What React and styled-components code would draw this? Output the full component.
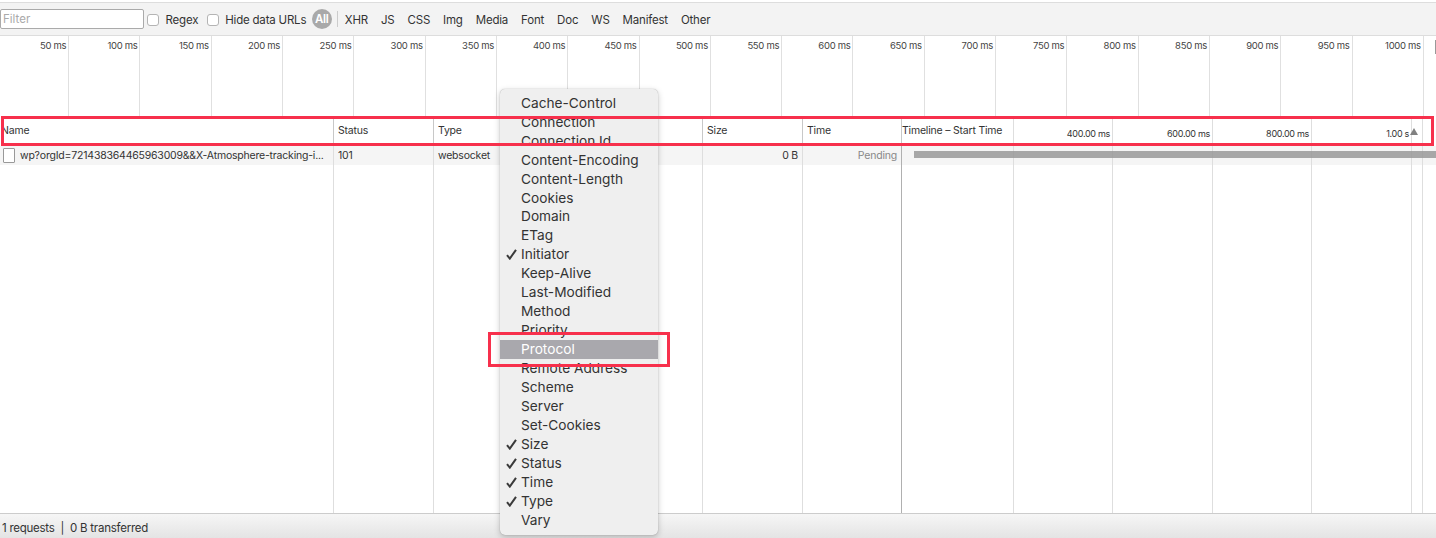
import React from "react";
import styled, { createGlobalStyle } from "styled-components";

const GlobalStyle = createGlobalStyle`
  html, body {
    margin: 0;
    padding: 0;
    background: #fff;
  }
  body {
    font-family: Inter, "Liberation Sans", sans-serif;
    color: #333;
  }
`;

const Page = styled.div`
  position: relative;
  width: 1436px;
  height: 538px;
  overflow: hidden;
  display: flex;
  flex-direction: column;
  padding-top: 2px;
  box-sizing: border-box;
`;

const Toolbar = styled.div`
  flex: none;
  height: 32px;
  display: flex;
  align-items: center;
  background: #f3f3f3;
  border-top: 1px solid #ddd;
  border-bottom: 1px solid #ddd;
  font-size: 11.5px;
  letter-spacing: -0.2px;
  color: #333;
`;

const FilterInput = styled.input`
  width: 144px;
  height: 20px;
  box-sizing: border-box;
  margin: 0;
  padding: 0 2px;
  border: 1px solid #aaa;
  border-radius: 2px;
  background: #fff;
  font: inherit;
  &::placeholder {
    color: #aaa;
  }
`;

const CheckLabel = styled.label`
  display: flex;
  align-items: center;
  margin-left: ${(p) => p.$left}px;
  padding-top: 1px;
  gap: 6.5px;
`;

const CheckBox = styled.span`
  width: 10px;
  height: 10px;
  background: #fff;
  border: 1px solid #b4b4b4;
  border-radius: 3px;
`;

const AllPill = styled.span`
  margin-left: 5.5px;
  width: 20px;
  height: 20px;
  border-radius: 10px;
  background: #a9a9a9;
  color: #fff;
  font-weight: 600;
  text-align: center;
  line-height: 20px;
`;

const Divider = styled.span`
  width: 1px;
  height: 16px;
  margin: 0 7px 0 5px;
  background: #ccc;
`;

const TypeFilters = styled.div`
  display: flex;
  gap: 13px;
  padding-top: 1px;
`;

const Overview = styled.div`
  flex: none;
  height: 81px;
  display: flex;
  background: #fff;
`;

const Tick = styled.div`
  flex: none;
  width: 71.3px;
  box-sizing: border-box;
  padding: 4px 2px 0 0;
  border-right: 1px solid #e0e0e0;
  text-align: right;
  font-size: 9.5px;
  letter-spacing: -0.3px;
  line-height: 12px;
  color: #444;
  white-space: nowrap;
  &:first-child {
    width: 69.2px;
  }
`;

const Table = styled.div`
  flex: 1;
  min-height: 0;
  display: flex;
  background: #fff;
  font-size: 10.5px;
  letter-spacing: -0.2px;
`;

const Column = styled.div`
  flex: none;
  width: ${(p) => p.$width}px;
  box-sizing: border-box;
  border-right: 1px solid ${(p) => p.$line || "#dedede"};
  min-width: 0;
`;

const Head = styled.div`
  height: 29px;
  box-sizing: border-box;
  padding-left: ${(p) => p.$pad ?? 4}px;
  line-height: 27px;
  color: #333;
  background: #fff;
  white-space: nowrap;
  box-shadow: 1px 0 0 #c8c8c8;
`;

const Cell = styled.div`
  height: 19px;
  box-sizing: border-box;
  padding: 0 ${(p) => (p.$right ? 4 : 0)}px 0 ${(p) => (p.$right ? 0 : 4)}px;
  background: #f5f5f5;
  text-align: ${(p) => (p.$right ? "right" : "left")};
  color: ${(p) => (p.$muted ? "#888" : "#333")};
  line-height: 19px;
  white-space: nowrap;
  overflow: hidden;
`;

const NameCell = styled(Cell)`
  display: flex;
  align-items: center;
  gap: 5px;
  padding-left: 3px;
`;

const FileIcon = styled.span`
  flex: none;
  width: 10px;
  height: 13px;
  background: #fff;
  border: 1px solid #999;
  border-radius: 1px;
`;

const Timeline = styled.div`
  position: relative;
  flex: 1;
  min-width: 0;
  display: flex;
`;

const Segment = styled.div`
  flex: ${(p) => (p.$width ? "none" : "1")};
  width: ${(p) => (p.$width ? `${p.$width}px` : "auto")};
  box-sizing: border-box;
  border-right: ${(p) => (p.$width ? "1px solid #dedede" : "none")};
`;

const SegmentHead = styled.div`
  height: 29px;
  box-sizing: border-box;
  padding: 0 2px 0 0;
  display: flex;
  justify-content: ${(p) => (p.$title ? "flex-start" : "flex-end")};
  font-size: ${(p) => (p.$title ? 10.5 : 9)}px;
  letter-spacing: ${(p) => (p.$title ? -0.2 : -0.3)}px;
  line-height: ${(p) => (p.$title ? 27 : 33)}px;
  color: #333;
  background: #fff;
  white-space: nowrap;
`;

const SegmentRow = styled.div`
  height: 19px;
  background: #f5f5f5;
`;

const WaterfallBar = styled.div`
  position: absolute;
  top: 34px;
  left: 12px;
  right: 0;
  height: 7px;
  background: rgba(150, 150, 150, 0.82);
`;

const SortArrow = styled.div`
  position: absolute;
  top: 11px;
  left: 508px;
  width: 0;
  height: 0;
  border-left: 4px solid transparent;
  border-right: 4px solid transparent;
  border-bottom: 7px solid #808080;
`;

const OverviewMark = styled.div`
  position: absolute;
  top: 40px;
  right: 0;
  width: 1px;
  height: 14px;
  background: #999;
`;

const Footer = styled.div`
  flex: none;
  height: 25px;
  box-sizing: border-box;
  padding-left: 2px;
  border-top: 1px solid #ccc;
  background: linear-gradient(#f6f6f6, #e4e4e4);
  font-size: 11.5px;
  letter-spacing: -0.25px;
  line-height: 28px;
  color: #333;
  white-space: pre;
`;

const Menu = styled.div`
  position: absolute;
  top: 89px;
  left: 500px;
  width: 158px;
  box-sizing: border-box;
  padding: 4.75px 0 5px;
  background: #efefef;
  border-radius: 5px;
  box-shadow: 0 0 1px rgba(0, 0, 0, 0.35), 0 2px 6px rgba(0, 0, 0, 0.22);
  font-size: 13.7px;
`;

const MenuItem = styled.div`
  position: relative;
  height: 18.96px;
  padding-left: 21px;
  line-height: 19px;
  color: ${(p) => (p.$active ? "#fff" : "#333")};
  background: ${(p) => (p.$active ? "#a9a8ad" : "transparent")};
`;

const Tickmark = styled.svg`
  position: absolute;
  top: 4px;
  left: 6px;
  width: 11px;
  height: 11px;
`;

const Highlight = styled.div`
  position: absolute;
  top: ${(p) => p.$top}px;
  left: ${(p) => p.$left}px;
  width: ${(p) => p.$w}px;
  height: ${(p) => p.$h}px;
  box-sizing: border-box;
  border: 3px solid #f7304c;
`;

const FILTERS = ["XHR", "JS", "CSS", "Img", "Media", "Font", "Doc", "WS", "Manifest", "Other"];

const TICKS = Array.from({ length: 20 }, (_, i) => `${(i + 1) * 50} ms`);

const SEGMENTS = [
  { width: 112, title: "Timeline – Start Time" },
  { width: 99, label: "400.00 ms" },
  { width: 100, label: "600.00 ms" },
  { width: 99, label: "800.00 ms" },
  { width: 100, label: "1.00 s" },
  { width: 11 },
  {},
];

const MENU_ITEMS = [
  { label: "Cache-Control" },
  { label: "Connection" },
  { label: "Connection Id" },
  { label: "Content-Encoding" },
  { label: "Content-Length" },
  { label: "Cookies" },
  { label: "Domain" },
  { label: "ETag" },
  { label: "Initiator", checked: true },
  { label: "Keep-Alive" },
  { label: "Last-Modified" },
  { label: "Method" },
  { label: "Priority" },
  { label: "Protocol", active: true },
  { label: "Remote Address" },
  { label: "Scheme" },
  { label: "Server" },
  { label: "Set-Cookies" },
  { label: "Size", checked: true },
  { label: "Status", checked: true },
  { label: "Time", checked: true },
  { label: "Type", checked: true },
  { label: "Vary" },
];

const App = () => {
  return (
    <Page>
      <GlobalStyle />
      <Toolbar>
        <FilterInput placeholder="Filter" readOnly />
        <CheckLabel $left={3}>
          <CheckBox />
          Regex
        </CheckLabel>
        <CheckLabel $left={8.5}>
          <CheckBox />
          Hide data URLs
        </CheckLabel>
        <AllPill>All</AllPill>
        <Divider />
        <TypeFilters>
          {FILTERS.map((name) => (
            <span key={name}>{name}</span>
          ))}
        </TypeFilters>
      </Toolbar>
      <Overview>
        {TICKS.map((tick) => (
          <Tick key={tick}>{tick}</Tick>
        ))}
      </Overview>
      <OverviewMark />
      <Table>
        <Column $width={334}>
          <Head $pad={1}>Name</Head>
          <NameCell>
            <FileIcon />
            wp?orgId=721438364465963009&&X-Atmosphere-tracking-i...
          </NameCell>
        </Column>
        <Column $width={100}>
          <Head>Status</Head>
          <Cell>101</Cell>
        </Column>
        <Column $width={100}>
          <Head>Type</Head>
          <Cell>websocket</Cell>
        </Column>
        <Column $width={169}>
          <Head />
          <Cell />
        </Column>
        <Column $width={100}>
          <Head>Size</Head>
          <Cell $right>0 B</Cell>
        </Column>
        <Column $width={99} $line="#b0b0b0">
          <Head>Time</Head>
          <Cell $right $muted>
            Pending
          </Cell>
        </Column>
        <Timeline>
          {SEGMENTS.map((seg, i) => (
            <Segment key={i} $width={seg.width}>
              <SegmentHead $title={!!seg.title}>{seg.title || seg.label}</SegmentHead>
              <SegmentRow />
            </Segment>
          ))}
          <WaterfallBar />
          <SortArrow />
        </Timeline>
      </Table>
      <Footer>1 requests  |  0 B transferred</Footer>
      <Menu>
        {MENU_ITEMS.map((item) => (
          <MenuItem key={item.label} $active={item.active}>
            {item.checked && (
              <Tickmark viewBox="0 0 11 11">
                <path d="M1 6.2 L3.8 9.6 L10 0.8" fill="none" stroke="#3a3a3a" strokeWidth="2" />
              </Tickmark>
            )}
            {item.label}
          </MenuItem>
        ))}
      </Menu>
      <Highlight $top={116} $left={1} $w={1433} $h={30} />
      <Highlight $top={332} $left={488} $w={182} $h={35} />
    </Page>
  );
};

export default App;
